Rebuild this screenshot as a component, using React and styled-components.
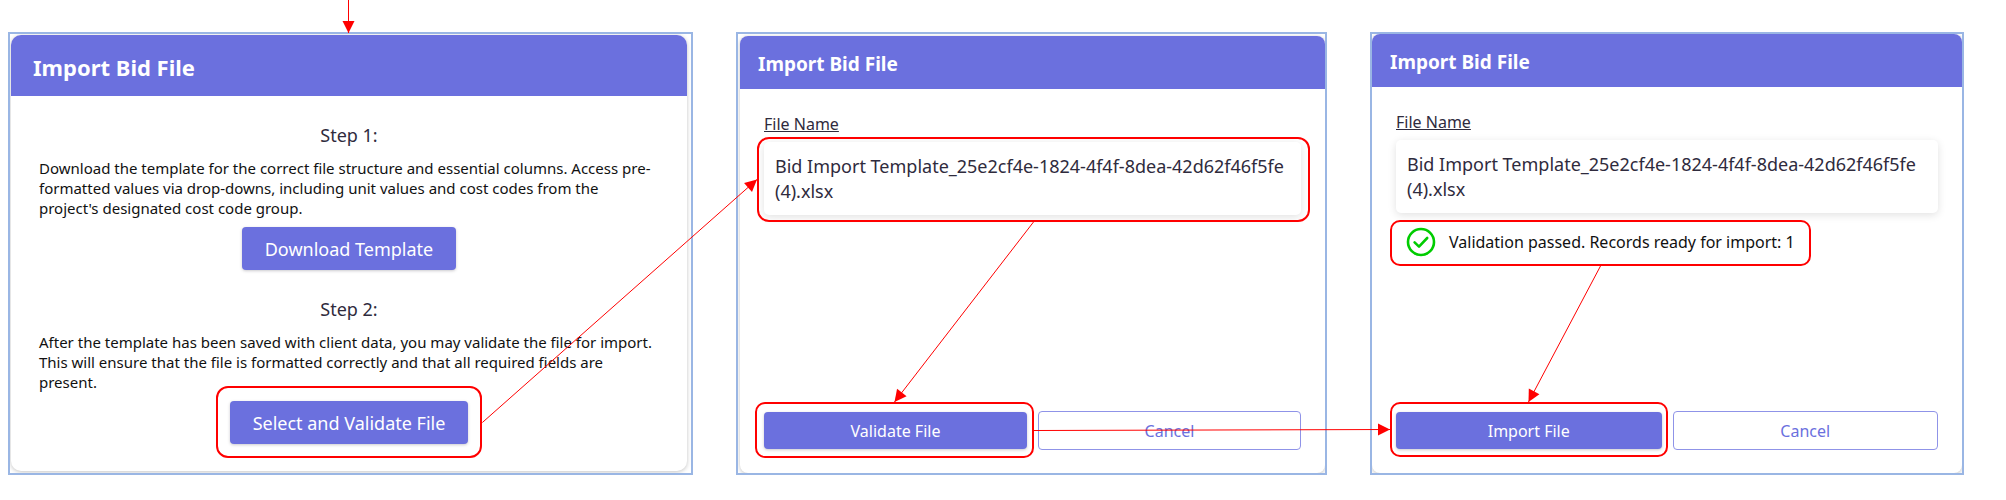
import React, { useLayoutEffect, useRef, useState } from 'react';
import styled, { createGlobalStyle } from 'styled-components';

const GlobalStyle = createGlobalStyle`
  * {
    box-sizing: border-box;
  }

  body {
    margin: 0;
    background-color: #fff;
    font-family: 'Noto Sans', sans-serif;
    font-size: 16px;
    color: #2f2b3d;
  }
`;

const Board = styled.main`
  position: relative;
  display: grid;
  grid-template-columns: 685fr 591fr 594fr;
  gap: 43px;
  min-height: 100vh;
  padding: 32px 42px 25px 8px;
`;

const Frame = styled.section`
  display: flex;
  min-width: 0;
  padding: ${(props) => props.$inset};
  border: 2px solid #9ab6e4;
  overflow: hidden;
`;

const Card = styled.div`
  display: flex;
  flex-direction: column;
  flex: 1;
  min-width: 0;
  border-radius: ${(props) => (props.$large ? '10px' : '8px')};
  background-color: #fff;
  box-shadow: 0 1px 4px rgba(0, 0, 0, 0.24);
  overflow: hidden;
`;

const CardHeader = styled.header`
  padding: ${(props) => (props.$large ? '17px 22px 14px' : '14px 18px 11px')};
  background-color: #6b70de;
`;

const Title = styled.h1`
  margin: 0;
  color: #fff;
  font-size: ${(props) => (props.$large ? '22px' : '19px')};
  font-weight: 700;
  line-height: ${(props) => (props.$large ? '30px' : '28px')};
`;

const StepBody = styled.div`
  display: flex;
  flex-direction: column;
  gap: 27px;
  padding: 27px 28px;
`;

const Step = styled.div`
  display: flex;
  flex-direction: column;
  align-items: center;
`;

const StepTitle = styled.h2`
  margin: 0 0 11px;
  font-size: 18px;
  font-weight: 400;
  line-height: 24px;
`;

const StepText = styled.p`
  align-self: stretch;
  margin: 0 0 9px;
  color: #111;
  font-size: 15px;
  line-height: 20px;
`;

const FormBody = styled.div`
  display: flex;
  flex-direction: column;
  align-items: stretch;
  flex: 1;
  padding: 24px 24px 23px;
`;

const FieldLabel = styled.label`
  align-self: flex-start;
  margin-bottom: 7px;
  line-height: 22px;
  text-decoration: underline;
`;

const FileBox = styled.output`
  display: block;
  padding: 12px 11px 11px;
  border-radius: 5px;
  background-color: #fff;
  box-shadow: 0 2px 8px rgba(0, 0, 0, 0.12);
  font-size: 18px;
  line-height: 25px;
`;

const Status = styled.div`
  display: flex;
  align-items: center;
  gap: 13px;
  height: 30px;
  color: #111;
`;

const Actions = styled.div`
  display: grid;
  grid-template-columns: 1fr 1fr;
  align-items: center;
  gap: 11px;
  margin-top: auto;
`;

// Keeps a callout outline attached to the element it surrounds
const Marked = styled.div`
  position: relative;
  align-self: ${(props) => props.$align || 'auto'};
  margin: ${(props) => props.$margin || 0};
`;

const Outline = styled.span`
  position: absolute;
  inset: ${(props) => props.$inset};
  border: 2px solid #f00;
  border-radius: ${(props) => props.$radius || '10px'};
  pointer-events: none;
`;

const Button = styled.button`
  height: 43px;
  padding: 0 23px;
  border: none;
  border-radius: 4px;
  background-color: #6b70de;
  box-shadow: 0 1px 3px rgba(47, 43, 61, 0.25);
  color: #fff;
  font-family: inherit;
  font-size: 18px;
  line-height: 24px;
  cursor: pointer;
`;

const ActionButton = styled(Button)`
  display: block;
  width: 100%;
  height: 37px;
  font-size: 16px;
`;

const CancelButton = styled(ActionButton)`
  height: 39px;
  border: 1px solid #8f93e8;
  background-color: #fff;
  box-shadow: none;
  color: #6b70de;
`;

const Connectors = styled.svg`
  position: absolute;
  top: 0;
  left: 0;
  width: 100%;
  height: 100%;
  pointer-events: none;
`;

const FILE_NAME = 'Bid Import Template_25e2cf4e-1824-4f4f-8dea-42d62f46f5fe (4).xlsx';

function CheckIcon() {
  return (
    <svg width="30" height="30" viewBox="0 0 30 30" fill="none" stroke="#0c0" strokeWidth="2.6">
      <circle cx="15" cy="15" r="13" />
      <path d="M8.6 15.4 L13 19.6 L21.2 11" strokeLinecap="round" strokeLinejoin="round" />
    </svg>
  );
}

function Arrow({ from, to }) {
  const [x1, y1] = from;
  const [x2, y2] = to;
  const angle = (Math.atan2(y2 - y1, x2 - x1) * 180) / Math.PI;
  return (
    <g>
      <line x1={x1} y1={y1} x2={x2} y2={y2} stroke="#f00" strokeWidth="1" />
      <path d="M0 0 L-12 -6 L-12 6 Z" fill="#f00" transform={`translate(${x2} ${y2}) rotate(${angle})`} />
    </g>
  );
}

function ImportCard({ idPrefix, action, status, boxRef, actionRef, actionInset }) {
  return (
    <Card>
      <CardHeader>
        <Title>Import Bid File</Title>
      </CardHeader>
      <FormBody>
        <FieldLabel htmlFor={idPrefix + '-file'}>File Name</FieldLabel>
        <Marked>
          <FileBox id={idPrefix + '-file'}>{FILE_NAME}</FileBox>
          {boxRef && <Outline ref={boxRef} $inset="-5px -9px -7px -7px" $radius="12px" />}
        </Marked>
        {status}
        <Actions>
          <Marked>
            <ActionButton type="button">{action}</ActionButton>
            <Outline ref={actionRef} $inset={actionInset} />
          </Marked>
          <CancelButton type="button">Cancel</CancelButton>
        </Actions>
      </FormBody>
    </Card>
  );
}

function App() {
  const board = useRef(null);
  const firstFrame = useRef(null);
  const select = useRef(null);
  const file = useRef(null);
  const validate = useRef(null);
  const passed = useRef(null);
  const importFile = useRef(null);
  const [arrows, setArrows] = useState([]);

  useLayoutEffect(() => {
    function measure() {
      const origin = board.current.getBoundingClientRect();
      const edges = (ref) => {
        const r = ref.current.getBoundingClientRect();
        const left = r.left - origin.left;
        const top = r.top - origin.top;
        const midX = Math.floor(left + r.width / 2) + 0.5;
        const midY = Math.floor(top + r.height / 2) + 0.5;
        return {
          left: [left, midY],
          right: [left + r.width, midY],
          top: [midX, top],
          bottom: [midX, top + r.height],
        };
      };
      const startX = edges(select).top[0];
      setArrows([
        { from: [startX, 0], to: [startX, edges(firstFrame).top[1] + 1] },
        { from: edges(select).right, to: edges(file).left },
        { from: edges(file).bottom, to: edges(validate).top },
        { from: edges(validate).right, to: edges(importFile).left },
        { from: edges(passed).bottom, to: edges(importFile).top },
      ]);
    }
    measure();
    window.addEventListener('resize', measure);
    return () => window.removeEventListener('resize', measure);
  }, []);

  return (
    <>
      <GlobalStyle />
      <Board ref={board}>
        <Frame ref={firstFrame} $inset="1px 4px 2px 1px">
          <Card $large>
            <CardHeader $large>
              <Title $large>Import Bid File</Title>
            </CardHeader>
            <StepBody>
              <Step>
                <StepTitle>Step 1:</StepTitle>
                <StepText>
                  Download the template for the correct file structure and essential columns. Access pre-formatted
                  values via drop-downs, including unit values and cost codes from the project's designated cost code
                  group.
                </StepText>
                <Button type="button">Download Template</Button>
              </Step>
              <Step>
                <StepTitle>Step 2:</StepTitle>
                <StepText>
                  After the template has been saved with client data, you may validate the file for import. This will
                  ensure that the file is formatted correctly and that all required fields are present.
                </StepText>
                <Marked>
                  <Button type="button">Select and Validate File</Button>
                  <Outline ref={select} $inset="-15px -14px -14px" $radius="12px" />
                </Marked>
              </Step>
            </StepBody>
          </Card>
        </Frame>

        <Frame $inset="2px 0 0 2px">
          <ImportCard
            idPrefix="validate"
            action="Validate File"
            boxRef={file}
            actionRef={validate}
            actionInset="-10px -7px -9px -9px"
          />
        </Frame>

        <Frame $inset="0">
          <ImportCard
            idPrefix="import"
            action="Import File"
            actionRef={importFile}
            actionInset="-10px -6px -8px -6px"
            status={
              <Marked $align="flex-start" $margin="14px 0 0 10px">
                <Status role="status">
                  <CheckIcon />
                  Validation passed. Records ready for import: 1
                </Status>
                <Outline ref={passed} $inset="-7px -16px -9px" />
              </Marked>
            }
          />
        </Frame>

        <Connectors aria-hidden="true">
          {arrows.map((arrow, i) => (
            <Arrow key={i} from={arrow.from} to={arrow.to} />
          ))}
        </Connectors>
      </Board>
    </>
  );
}

export default App;
